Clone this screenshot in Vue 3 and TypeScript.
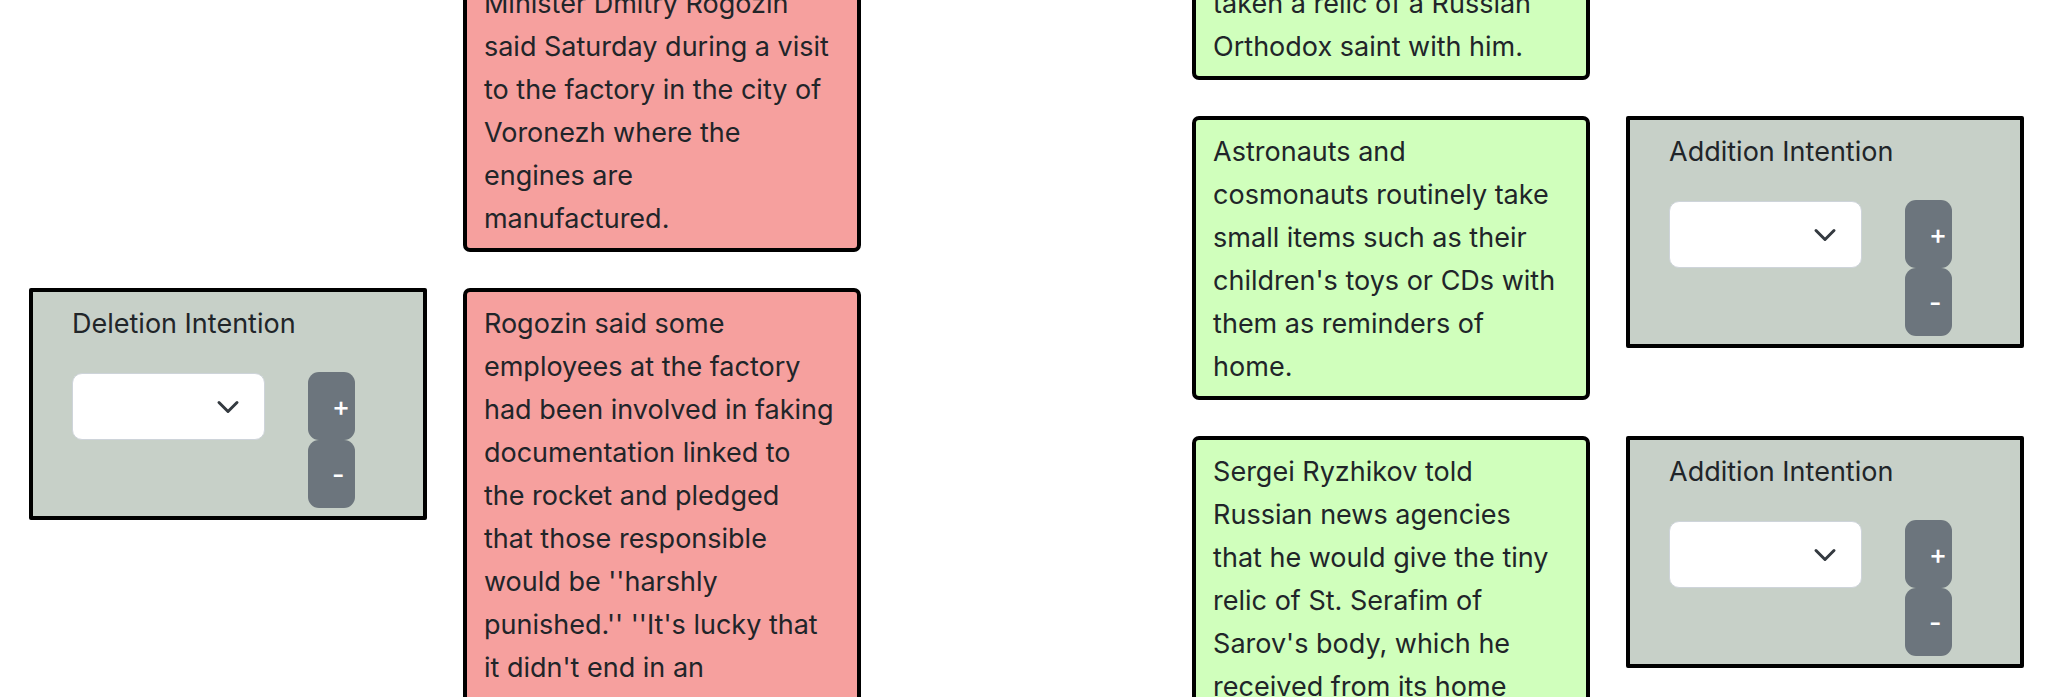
<script setup lang="ts">
import { ref } from 'vue'

type Kind = 'deletion' | 'addition'

interface Passage {
  id: string
  text: string
  annotated: boolean
}

interface Side {
  kind: Kind
  label: string
  passages: Passage[]
}

const sides: Side[] = [
  {
    kind: 'deletion',
    label: 'Deletion Intention',
    passages: [
      {
        id: 'del-1',
        annotated: false,
        text: 'Minister Dmitry Rogozin\nsaid Saturday during a visit\nto the factory in the city of\nVoronezh where the\nengines are\nmanufactured.',
      },
      {
        id: 'del-2',
        annotated: true,
        text: "Rogozin said some\nemployees at the factory\nhad been involved in faking\ndocumentation linked to\nthe rocket and pledged\nthat those responsible\nwould be ''harshly\npunished.'' ''It's lucky that\nit didn't end in an",
      },
    ],
  },
  {
    kind: 'addition',
    label: 'Addition Intention',
    passages: [
      {
        id: 'add-1',
        annotated: false,
        text: 'taken a relic of a Russian\nOrthodox saint with him.',
      },
      {
        id: 'add-2',
        annotated: true,
        text: "Astronauts and\ncosmonauts routinely take\nsmall items such as their\nchildren's toys or CDs with\nthem as reminders of\nhome.",
      },
      {
        id: 'add-3',
        annotated: true,
        text: "Sergei Ryzhikov told\nRussian news agencies\nthat he would give the tiny\nrelic of St. Serafim of\nSarov's body, which he\nreceived from its home",
      },
    ],
  },
]

const chosen = ref<Record<string, string>>({ 'del-2': '', 'add-2': '', 'add-3': '' })
</script>

<template>
  <main class="board">
    <section v-for="side in sides" :key="side.kind" class="side" :class="side.kind">
      <div v-for="p in side.passages" :key="p.id" class="row">
        <p class="passage">{{ p.text }}</p>
        <div v-if="p.annotated" class="intention">
          <label class="intention-label" :for="p.id">{{ side.label }}</label>
          <div class="controls">
            <div class="picker">
              <select :id="p.id" v-model="chosen[p.id]" class="select">
                <option value=""></option>
              </select>
              <svg class="chevron" viewBox="0 0 16 16" aria-hidden="true">
                <path d="m2 5 6 6 6-6" />
              </svg>
            </div>
            <div class="buttons">
              <button type="button" class="btn">+</button>
              <button type="button" class="btn">-</button>
            </div>
          </div>
        </div>
      </div>
    </section>
  </main>
</template>

<style>
body {
  margin: 0;
  background: #fff;
}
</style>

<style scoped>
.board {
  box-sizing: border-box;
  display: grid;
  grid-template-columns: 1fr 1fr;
  column-gap: 16.6%;
  height: 100vh;
  overflow: hidden;
  padding: 0 24px 0 29px;
  color: #212529;
  font-family: Inter, "Liberation Sans", sans-serif;
  font-size: 27px;
  line-height: 43px;
}

.side {
  display: flex;
  flex-direction: column;
  gap: 36px;
  margin-top: -32px;
}

.row {
  display: grid;
  grid-template-columns: 1fr 1fr;
  gap: 36px;
  align-items: start;
}

.passage,
.intention {
  box-sizing: border-box;
  min-width: 0;
  margin: 0;
  border: 4px solid #000;
}

.passage {
  grid-row: 1;
  padding: 10px 8px 8px 17px;
  border-radius: 7px;
  white-space: pre-line;
}

.row:last-child .passage {
  padding-bottom: 24px;
}

.deletion .passage {
  grid-column: 2;
  background: #f6a09e;
}

.addition .passage {
  grid-column: 1;
  background: #d0ffbc;
}

.intention {
  grid-row: 1;
  padding: 10px 68px 8px 39px;
  border-radius: 2px;
  background: #c7d0c8;
}

.deletion .intention {
  grid-column: 1;
}

.addition .intention {
  grid-column: 2;
}

.intention-label {
  display: block;
  white-space: nowrap;
}

.controls {
  display: grid;
  grid-template-columns: 193fr 47fr;
  gap: 43px;
  align-items: start;
  margin-top: 27px;
}

.picker {
  display: grid;
  align-items: center;
  margin-top: 1px;
}

.select,
.chevron {
  grid-area: 1 / 1;
}

.select {
  appearance: none;
  box-sizing: border-box;
  width: 100%;
  height: 67px;
  padding: 10px 64px 10px 20px;
  border: 1px solid #ced4da;
  border-radius: 10px;
  background: #fff;
  color: inherit;
  font: inherit;
}

.chevron {
  justify-self: end;
  width: 24px;
  height: 24px;
  margin-right: 25px;
  fill: none;
  stroke: #343a40;
  stroke-width: 2;
  stroke-linecap: round;
  stroke-linejoin: round;
  pointer-events: none;
}

.buttons {
  display: flex;
  flex-direction: column;
}

.btn {
  height: 68px;
  padding: 0 0 0 24px;
  border: 0;
  border-radius: 11px;
  background: #6c757d;
  color: #fff;
  font: inherit;
  font-weight: 500;
  text-align: left;
}
</style>
